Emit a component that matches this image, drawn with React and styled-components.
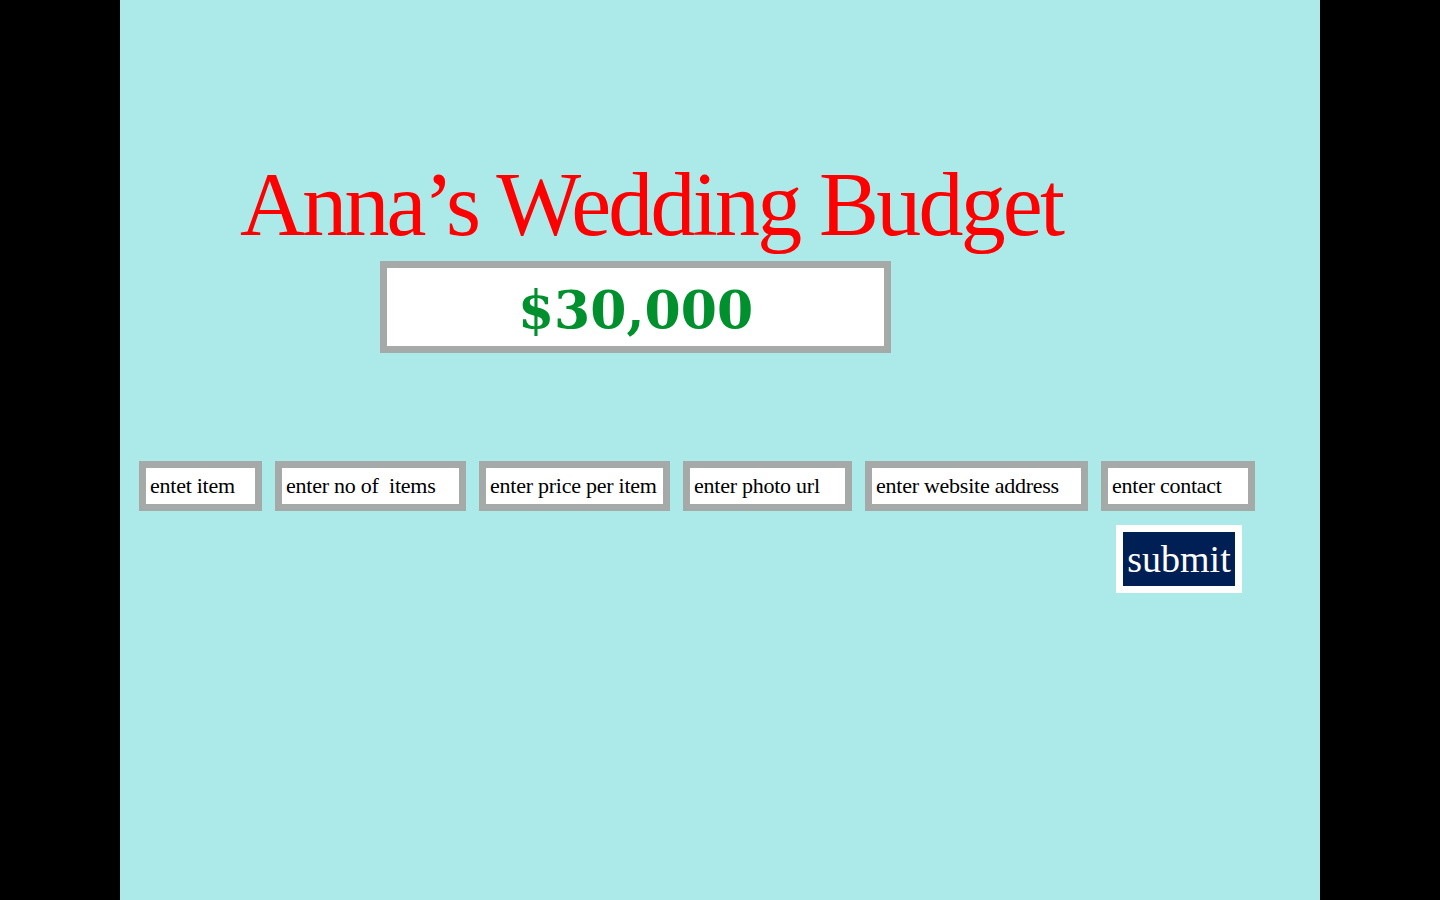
import React from "react";
import styled, { createGlobalStyle } from "styled-components";

const GlobalStyle = createGlobalStyle`
    html, body {
        margin: 0;
        padding: 0;
        background: #000;
    }
    * {
        box-sizing: border-box;
    }
`;

const fields = [
    { placeholder: "entet item", width: 123 },
    { placeholder: "enter no of  items", width: 191 },
    { placeholder: "enter price per item", width: 191 },
    { placeholder: "enter photo url", width: 169 },
    { placeholder: "enter website address", width: 223 },
    { placeholder: "enter contact", width: 154 },
];

const App = () => {
    return (
        <>
            <GlobalStyle />
            <Page>
                <Title>Anna’s Wedding Budget</Title>
                <BudgetBox>$30,000</BudgetBox>
                <FormRow>
                    {fields.map((f) => (
                        <Field
                            key={f.placeholder}
                            type="text"
                            placeholder={f.placeholder}
                            $width={f.width}
                        />
                    ))}
                </FormRow>
                <SubmitRow>
                    <SubmitButton type="button">submit</SubmitButton>
                </SubmitRow>
            </Page>
        </>
    );
};

const Page = styled.div`
    width: 1200px;
    min-height: 900px;
    margin: 0 auto;
    background: #ace9e9;
    display: flex;
    flex-direction: column;
    align-items: flex-start;
`;

const Title = styled.h1`
    margin: 0;
    padding: 160px 0 0 120px;
    font-family: "Liberation Serif", serif;
    font-weight: normal;
    font-size: 90px;
    line-height: 90px;
    letter-spacing: -2.8px;
    color: #ff0000;
    white-space: nowrap;
`;

const BudgetBox = styled.div`
    margin: 11px 0 0 260px;
    width: 511px;
    height: 92px;
    padding-top: 4px;
    border: 7px solid #a5a9a8;
    background: #fff;
    display: flex;
    align-items: center;
    justify-content: center;
    font-family: "DejaVu Serif", serif;
    font-weight: bold;
    font-size: 52px;
    color: #00902e;
`;

const FormRow = styled.div`
    margin-top: 108px;
    padding-left: 19px;
    display: flex;
    gap: 13px;
`;

const Field = styled.input`
    width: ${(p) => p.$width}px;
    height: 50px;
    border: 7px solid #a5a9a8;
    background: #fff;
    padding: 0 3px 0 4px;
    margin: 0;
    outline: none;
    font-family: "Liberation Serif", serif;
    font-size: 22px;
    letter-spacing: -0.25px;
    color: #000;
    &::placeholder {
        color: #000;
        opacity: 1;
    }
`;

const SubmitRow = styled.div`
    align-self: stretch;
    display: flex;
    justify-content: flex-end;
    padding-right: 78px;
    margin-top: 14px;
`;

const SubmitButton = styled.button`
    width: 126px;
    height: 68px;
    border: 7px solid #fff;
    background: #001f54;
    color: #fff;
    padding: 0;
    font-family: "Liberation Serif", serif;
    font-size: 38px;
    line-height: 1;
    cursor: pointer;
`;

export default App;
